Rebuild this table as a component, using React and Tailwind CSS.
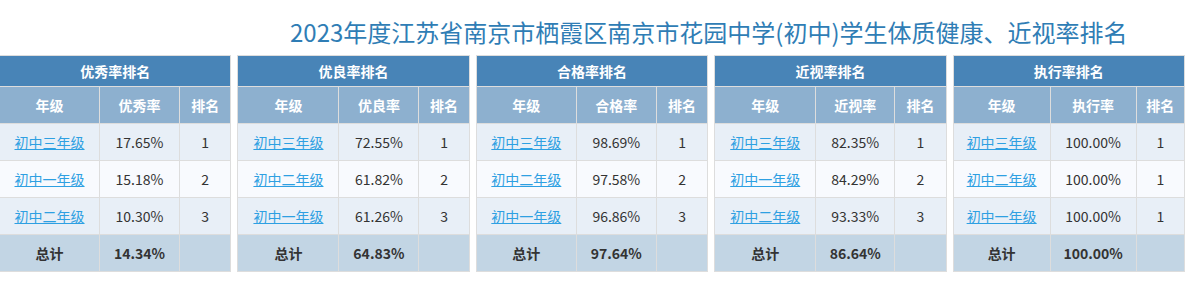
const tables = [
  {
    title: "优秀率排名",
    label: "优秀率",
    cols: ["w-[100px]", "w-[80px]", "w-auto"],
    rows: [
      ["初中三年级", "17.65%", "1"],
      ["初中一年级", "15.18%", "2"],
      ["初中二年级", "10.30%", "3"],
    ],
    total: "14.34%",
  },
  {
    title: "优良率排名",
    label: "优良率",
    cols: ["w-[101px]", "w-[80px]", "w-auto"],
    rows: [
      ["初中三年级", "72.55%", "1"],
      ["初中二年级", "61.82%", "2"],
      ["初中一年级", "61.26%", "3"],
    ],
    total: "64.83%",
  },
  {
    title: "合格率排名",
    label: "合格率",
    cols: ["w-[100px]", "w-[80px]", "w-auto"],
    rows: [
      ["初中三年级", "98.69%", "1"],
      ["初中二年级", "97.58%", "2"],
      ["初中一年级", "96.86%", "3"],
    ],
    total: "97.64%",
  },
  {
    title: "近视率排名",
    label: "近视率",
    cols: ["w-[101px]", "w-[79px]", "w-auto"],
    rows: [
      ["初中三年级", "82.35%", "1"],
      ["初中一年级", "84.29%", "2"],
      ["初中二年级", "93.33%", "3"],
    ],
    total: "86.64%",
  },
  {
    title: "执行率排名",
    label: "执行率",
    cols: ["w-[97px]", "w-[86px]", "w-auto"],
    rows: [
      ["初中三年级", "100.00%", "1"],
      ["初中二年级", "100.00%", "1"],
      ["初中一年级", "100.00%", "1"],
    ],
    total: "100.00%",
  },
];

// 单个排名表
function RankTable({ t }) {
  return (
    <table className="w-full table-fixed border-collapse border border-[#dddddd] text-[14px] text-[#333333]">
      <colgroup>
        {t.cols.map((c, i) => (
          <col key={i} className={c} />
        ))}
      </colgroup>
      <thead>
        <tr className="h-[31px] bg-[#4884b7]">
          <th colSpan={3} className="border border-[#dddddd] font-bold text-white">
            {t.title}
          </th>
        </tr>
        <tr className="h-[37px] bg-[#8db0cf] text-white">
          <th className="border border-[#dddddd] font-bold">年级</th>
          <th className="border border-[#dddddd] font-bold">{t.label}</th>
          <th className="border border-[#dddddd] font-bold">排名</th>
        </tr>
      </thead>
      <tbody>
        {t.rows.map((r, i) => (
          <tr key={i} className={i % 2 === 1 ? "h-[37px] bg-[#f8fafe]" : "h-[37px] bg-[#e8eff7]"}>
            <td className="border border-[#dddddd] text-center">
              <a href="#" className="text-[#2ea0e2] underline">
                {r[0]}
              </a>
            </td>
            <td className="border border-[#dddddd] text-center">{r[1]}</td>
            <td className="border border-[#dddddd] text-center">{r[2]}</td>
          </tr>
        ))}
        <tr className="h-[37px] bg-[#c2d5e4] font-bold">
          <td className="border border-[#dddddd] text-center">总计</td>
          <td className="border border-[#dddddd] text-center">{t.total}</td>
          <td className="border border-[#dddddd]"></td>
        </tr>
      </tbody>
    </table>
  );
}

export default function App() {
  return (
    <div className="w-[1188px] h-[300px] overflow-hidden bg-white font-['Noto_Sans_CJK_SC',sans-serif]">
      <div className="h-[55px] pt-[14px] pl-[290px] text-[24px] leading-[36px] text-[#2f7db5] whitespace-nowrap">
        2023年度江苏省南京市栖霞区南京市花园中学(初中)学生体质健康、近视率排名
      </div>
      <div className="flex w-[1186px] -ml-px gap-[6px]">
        {tables.map((t) => (
          <div key={t.title} className="flex-1 min-w-0">
            <RankTable t={t} />
          </div>
        ))}
      </div>
    </div>
  );
}
